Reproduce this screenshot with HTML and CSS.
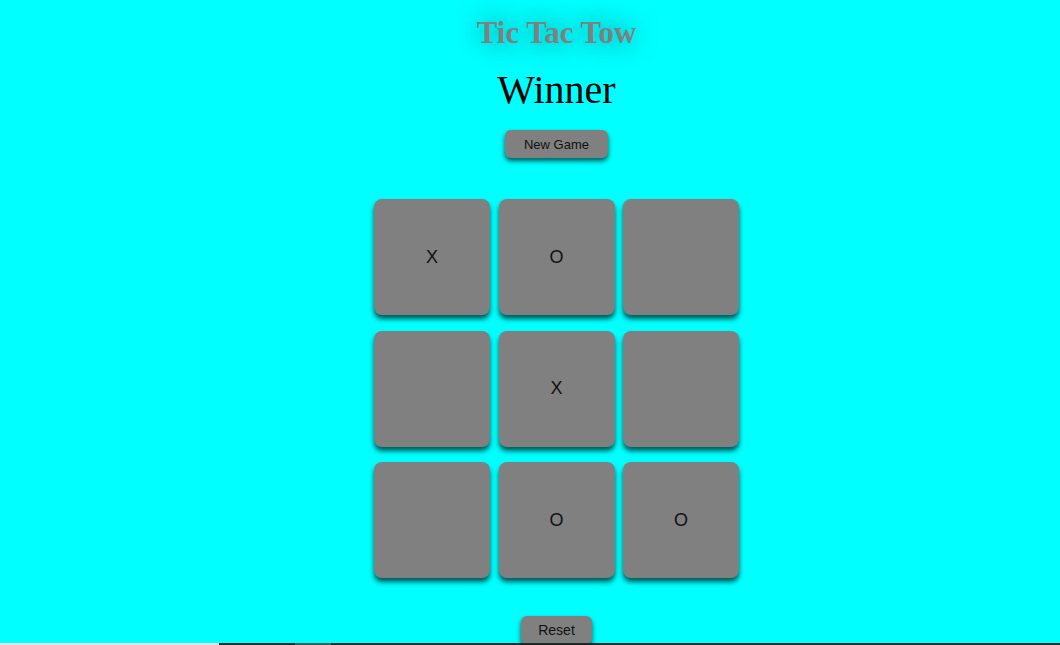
FILE: index.html
```html
<!DOCTYPE html>
<html lang="en">
<head>
<meta charset="utf-8">
<title>Tic Tac Tow</title>
<link rel="stylesheet" href="styles.css">
</head>
<body>
<main class="game">
  <h1 class="title">Tic Tac Tow</h1>
  <p class="winner">Winner</p>
  <button class="btn btn-new">New Game</button>
  <div class="board">
    <button class="cell">X</button>
    <button class="cell">O</button>
    <button class="cell"></button>
    <button class="cell"></button>
    <button class="cell">X</button>
    <button class="cell"></button>
    <button class="cell"></button>
    <button class="cell">O</button>
    <button class="cell">O</button>
  </div>
  <button class="btn btn-reset">Reset</button>
</main>
<div class="taskbar">
  <span class="tb-light"></span><span class="tb-dark"></span><span class="tb-mid"></span><span class="tb-rest"></span>
</div>
</body>
</html>
```

FILE: styles.css
```css
html, body {
  margin: 0;
  padding: 0;
  background: #00ffff;
  height: 100%;
  overflow: hidden;
}

.game {
  display: flex;
  flex-direction: column;
  align-items: center;
  padding-left: 53px;
}

.title {
  margin: 15px 0 0;
  font-family: "Liberation Serif", "Times New Roman", serif;
  font-weight: bold;
  font-size: 31px;
  line-height: 36px;
  color: #808080;
  text-shadow: 0 0 24px rgba(0, 40, 40, 0.55);
}

.winner {
  margin: 16px 0 0;
  font-family: "Liberation Serif", "Times New Roman", serif;
  font-size: 40px;
  line-height: 46px;
  color: #000;
}

.btn {
  font-family: "Liberation Sans", Arial, sans-serif;
  background: #808080;
  color: #111;
  border: none;
  border-radius: 6px;
  box-shadow: 0 3px 5px rgba(0, 0, 0, 0.65);
  padding: 0;
  height: 28px;
}

.btn-new {
  margin-top: 17px;
  width: 103px;
  font-size: 13px;
}

.board {
  margin-top: 41px;
  display: grid;
  grid-template-columns: repeat(3, 116px);
  grid-auto-rows: 116px;
  column-gap: 8.5px;
  row-gap: 15.5px;
}

.cell {
  background: #808080;
  border: none;
  border-radius: 8px;
  box-shadow: 0 4px 5px rgba(0, 0, 0, 0.65);
  font-family: "Liberation Sans", Arial, sans-serif;
  font-size: 18px;
  color: #111;
  padding: 0;
}

.btn-reset {
  margin-top: 38px;
  width: 71px;
  font-size: 14px;
}

.taskbar {
  position: fixed;
  left: 0;
  right: 0;
  bottom: 0;
  height: 2px;
  display: flex;
}

.tb-light { width: 219px; background: #e4e4e4; }
.tb-dark { width: 76px; background: #1c2925; }
.tb-mid { width: 36px; background: #4c5a55; }
.tb-rest { flex: 1; background: #1c2925; }
```
